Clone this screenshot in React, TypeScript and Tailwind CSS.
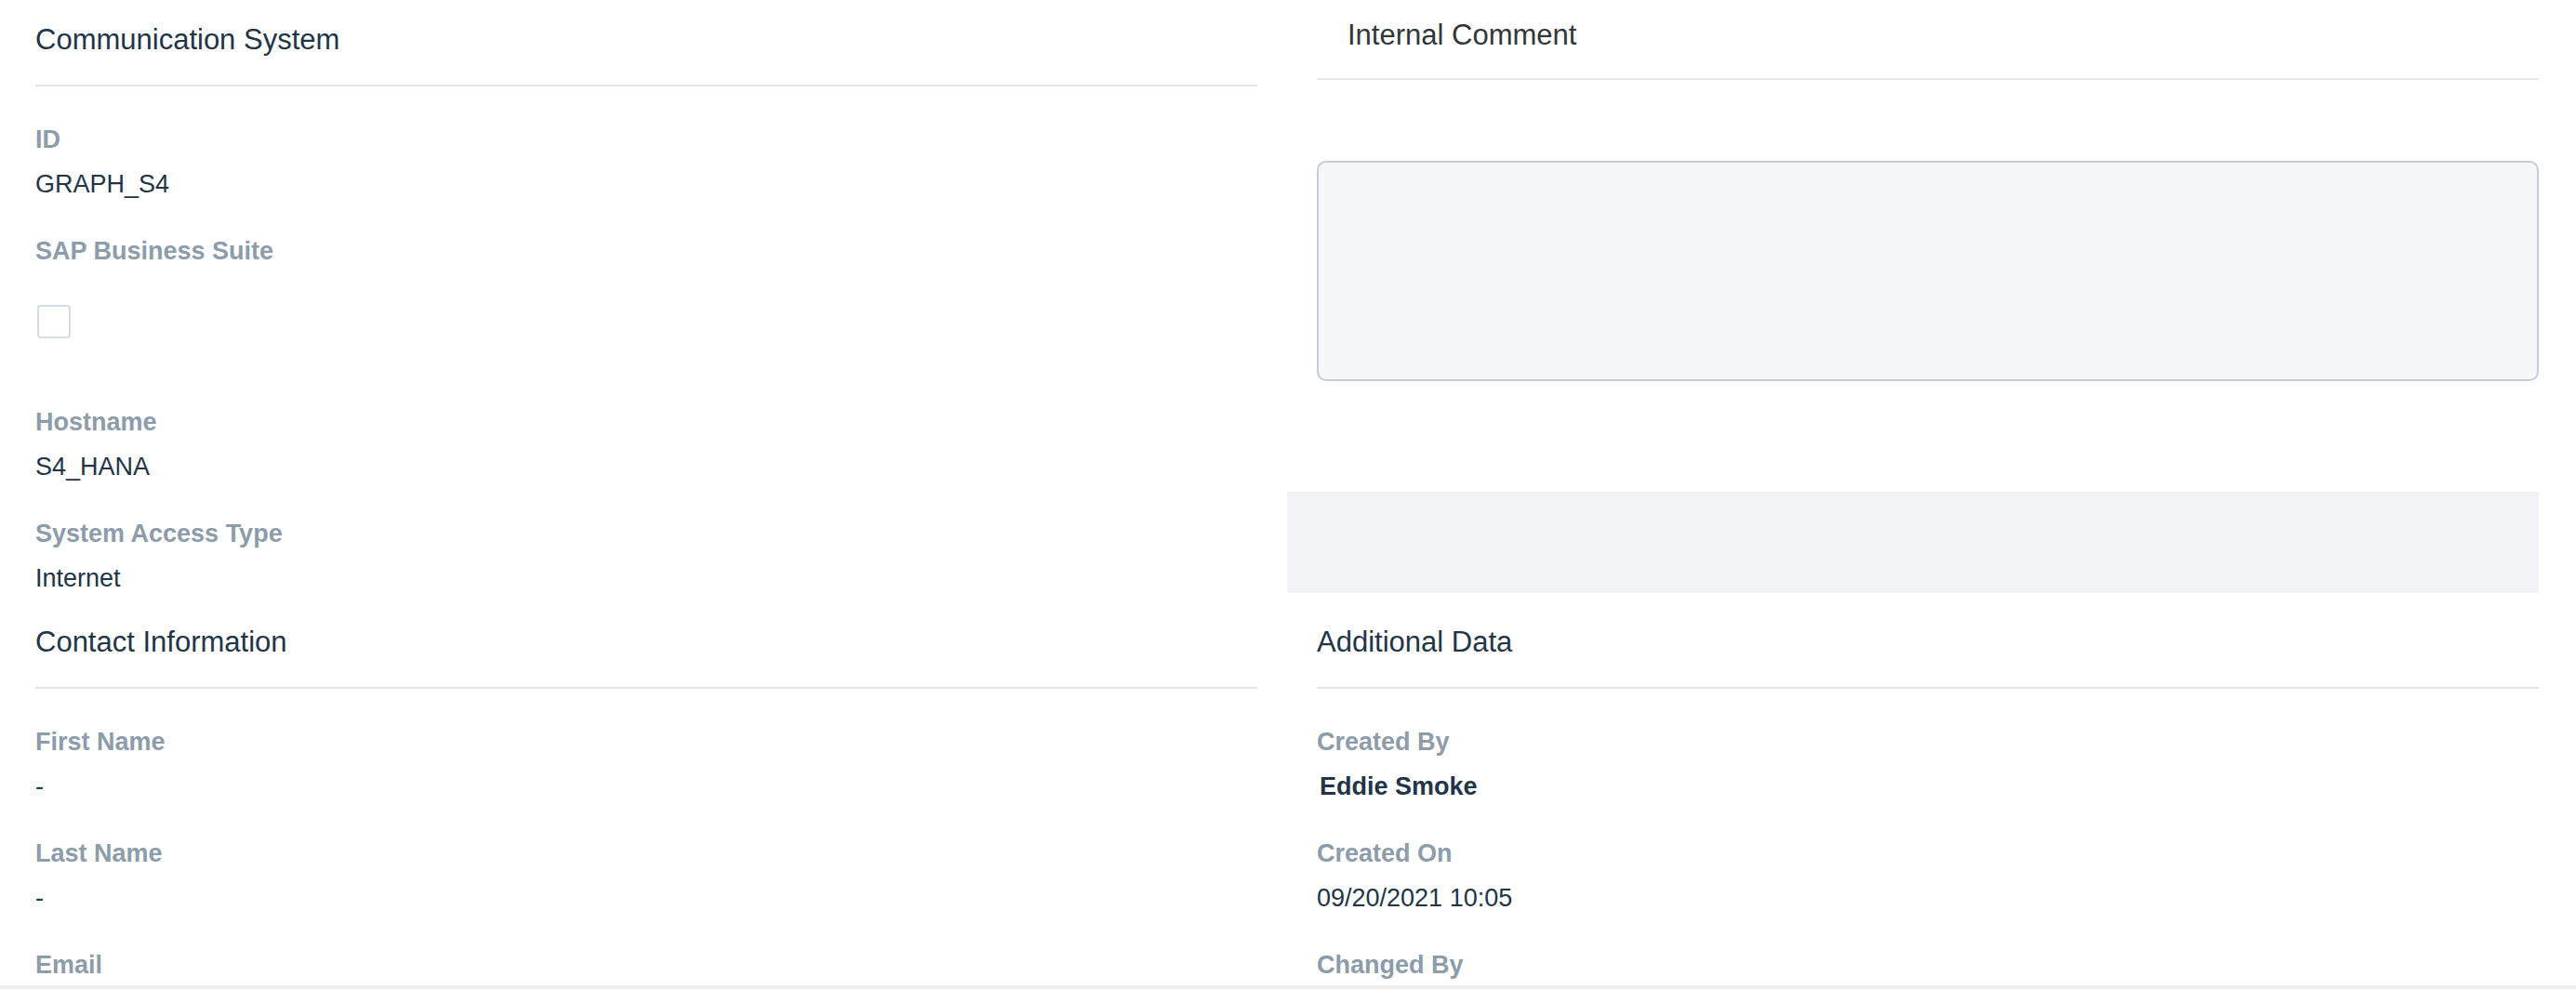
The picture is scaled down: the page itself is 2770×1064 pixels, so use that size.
import React from 'react';

interface FieldProps {
  label: string;
  value?: string;
  bold?: boolean;
}

function SectionHeader({ title }: { title: string }) {
  return (
    <div className="pt-[23px] pb-[28px] border-b-2 border-[#e5e5e5] text-[31px] leading-[40px] text-[#223548]">
      {title}
    </div>
  );
}

function Label({ children }: { children: React.ReactNode }) {
  return <div className="text-[27px] leading-[32px] font-bold text-[#8d9cab]">{children}</div>;
}

function Field({ label, value, bold }: FieldProps) {
  return (
    <div className="flex flex-col gap-4">
      <Label>{label}</Label>
      {value !== undefined && (
        <div
          className={`text-[27px] leading-[32px] text-[#223548] ${bold ? 'font-bold pl-[3px]' : ''}`}
        >
          {value}
        </div>
      )}
    </div>
  );
}

export default function App() {
  return (
    <div className="w-[2770px] h-[1064px] overflow-hidden bg-white flex flex-col font-['Liberation_Sans',Arial,sans-serif]">
      <div className="h-[1060px] overflow-hidden grid grid-cols-2 gap-x-16 pl-[38px] pr-[40px] content-start">
        {/* Communication System */}
        <div className="pb-[10px]">
          <SectionHeader title="Communication System" />
          <div className="pt-[41px] flex flex-col gap-10">
            <Field label="ID" value="GRAPH_S4" />
            <div className="flex flex-col">
              <Label>SAP Business Suite</Label>
              <div className="pt-[42px] pb-[34px] pl-[2px]">
                <div className="w-[36px] h-[36px] border-2 border-[#d8dee5] rounded-[4px] bg-white" />
              </div>
            </div>
            <Field label="Hostname" value="S4_HANA" />
            <Field label="System Access Type" value="Internet" />
          </div>
        </div>

        {/* Internal Comment */}
        <div className="pb-[10px] flex flex-col">
          <div className="pt-[18px] pb-[26px] pl-[33px] border-b-2 border-[#e5e5e5] text-[31px] leading-[40px] text-[#32363a]">
            Internal Comment
          </div>
          <div className="mt-[87px] h-[237px] border-2 border-[#c5cdd7] rounded-[10px] bg-[#f5f7fa]" />
          <div className="mt-[119px] h-[109px] -ml-8 bg-[#f2f3f7]" />
        </div>

        {/* Contact Information */}
        <div className="pt-[23px]">
          <div className="pb-[28px] border-b-2 border-[#e5e5e5] text-[31px] leading-[40px] text-[#223548]">
            Contact Information
          </div>
          <div className="pt-[41px] flex flex-col gap-10">
            <Field label="First Name" value="-" />
            <Field label="Last Name" value="-" />
            <Field label="Email" />
          </div>
        </div>

        {/* Additional Data */}
        <div className="pt-[23px]">
          <div className="pb-[28px] border-b-2 border-[#e5e5e5] text-[31px] leading-[40px] text-[#223548]">
            Additional Data
          </div>
          <div className="pt-[41px] flex flex-col gap-10">
            <Field label="Created By" value="Eddie Smoke" bold />
            <Field label="Created On" value="09/20/2021 10:05" />
            <Field label="Changed By" />
          </div>
        </div>
      </div>
      <div className="h-[4px] bg-[#eeeeee]" />
    </div>
  );
}
